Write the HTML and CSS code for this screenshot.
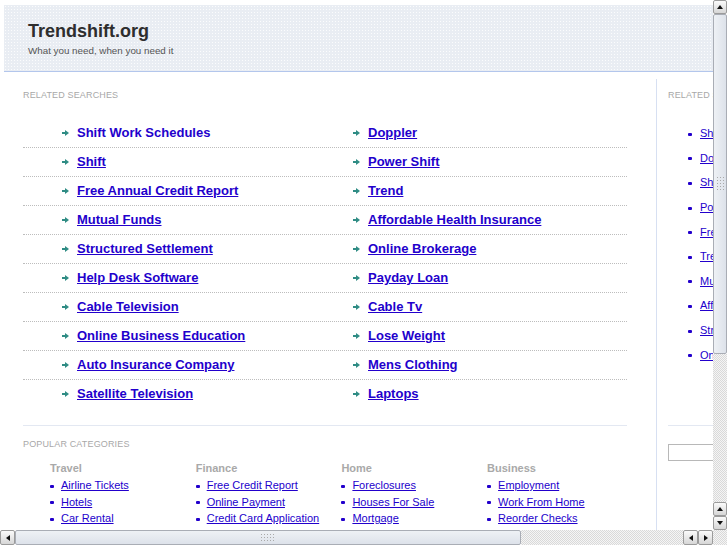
FILE: index.html
```html
<!DOCTYPE html>
<html>
<head>
<meta charset="utf-8">
<link rel="stylesheet" href="styles.css">
</head>
<body>
<div class="window">
  <div class="viewport">
    <div class="page">
      <div class="header">
        <div class="title">Trendshift.org</div>
        <div class="tagline">What you need, when you need it</div>
      </div>
      <div class="content">
        <div class="main">
          <div class="sec-title">RELATED SEARCHES</div>
          <div class="rows">
            <div class="row"><div class="cell c1"><span class="arr"></span><a class="big hover">Shift Work Schedules</a></div><div class="cell"><span class="arr"></span><a class="big">Doppler</a></div></div>
            <div class="row"><div class="cell c1"><span class="arr"></span><a class="big">Shift</a></div><div class="cell"><span class="arr"></span><a class="big">Power Shift</a></div></div>
            <div class="row"><div class="cell c1"><span class="arr"></span><a class="big">Free Annual Credit Report</a></div><div class="cell"><span class="arr"></span><a class="big">Trend</a></div></div>
            <div class="row"><div class="cell c1"><span class="arr"></span><a class="big">Mutual Funds</a></div><div class="cell"><span class="arr"></span><a class="big">Affordable Health Insurance</a></div></div>
            <div class="row"><div class="cell c1"><span class="arr"></span><a class="big">Structured Settlement</a></div><div class="cell"><span class="arr"></span><a class="big">Online Brokerage</a></div></div>
            <div class="row"><div class="cell c1"><span class="arr"></span><a class="big">Help Desk Software</a></div><div class="cell"><span class="arr"></span><a class="big">Payday Loan</a></div></div>
            <div class="row"><div class="cell c1"><span class="arr"></span><a class="big">Cable Television</a></div><div class="cell"><span class="arr"></span><a class="big">Cable Tv</a></div></div>
            <div class="row"><div class="cell c1"><span class="arr"></span><a class="big">Online Business Education</a></div><div class="cell"><span class="arr"></span><a class="big">Lose Weight</a></div></div>
            <div class="row"><div class="cell c1"><span class="arr"></span><a class="big">Auto Insurance Company</a></div><div class="cell"><span class="arr"></span><a class="big">Mens Clothing</a></div></div>
            <div class="row last"><div class="cell c1"><span class="arr"></span><a class="big">Satellite Television</a></div><div class="cell"><span class="arr"></span><a class="big">Laptops</a></div></div>
          </div>
          <div class="sep"></div>
          <div class="sec-title pop">POPULAR CATEGORIES</div>
          <div class="cats">
            <div class="cat">
              <div class="cat-head">Travel</div>
              <ul class="cat-list"><li><a>Airline Tickets</a></li><li><a>Hotels</a></li><li><a>Car Rental</a></li></ul>
            </div>
            <div class="cat">
              <div class="cat-head">Finance</div>
              <ul class="cat-list"><li><a>Free Credit Report</a></li><li><a>Online Payment</a></li><li><a>Credit Card Application</a></li></ul>
            </div>
            <div class="cat">
              <div class="cat-head">Home</div>
              <ul class="cat-list"><li><a>Foreclosures</a></li><li><a>Houses For Sale</a></li><li><a>Mortgage</a></li></ul>
            </div>
            <div class="cat">
              <div class="cat-head">Business</div>
              <ul class="cat-list"><li><a>Employment</a></li><li><a>Work From Home</a></li><li><a>Reorder Checks</a></li></ul>
            </div>
          </div>
        </div>
        <div class="side">
          <div class="sec-title">RELATED SEARCHES</div>
          <ul class="side-list">
            <li><a>Shift Work Schedules</a></li>
            <li><a>Doppler</a></li>
            <li><a>Shift</a></li>
            <li><a>Power Shift</a></li>
            <li><a>Free Annual Credit Report</a></li>
            <li><a>Trend</a></li>
            <li><a>Mutual Funds</a></li>
            <li><a>Affordable Health Insurance</a></li>
            <li><a>Structured Settlement</a></li>
            <li><a>Online Brokerage</a></li>
          </ul>
          <div class="side-sep"></div>
          <input class="search" type="text">
        </div>
      </div>
    </div>
  </div>
  <div class="vscroll">
    <div class="btn up"></div>
    <div class="thumb vthumb"><span class="grip vgrip"></span></div>
    <div class="track"></div>
    <div class="btn up"></div>
    <div class="btn down"></div>
  </div>
  <div class="hscroll">
    <div class="btn left"></div>
    <div class="thumb hthumb"><span class="grip hgrip"></span></div>
    <div class="track"></div>
    <div class="btn left"></div>
    <div class="btn right"></div>
  </div>
  <div class="corner"></div>
</div>
</body>
</html>
```
FILE: styles.css
```css
html, body {
  margin: 0;
  padding: 0;
  background: #fff;
}
body {
  font-family: "Liberation Sans", Arial, sans-serif;
}
.window {
  width: 727px;
  height: 545px;
  display: grid;
  grid-template-columns: 713px 14px;
  grid-template-rows: 530px 15px;
  overflow: hidden;
}
.viewport {
  overflow: hidden;
  background: #fff;
}
.page {
  width: 960px;
  padding: 5px 0 0 4px;
}
.header {
  height: 67px;
  border-bottom: 1px solid #b3c6ec;
  background-color: #e9edf3;
  background-image: radial-gradient(circle, #fbfcfd 0.6px, transparent 0.9px);
  background-size: 3px 3px;
  padding-left: 24px;
  box-sizing: border-box;
  padding-top: 15px;
}
.title {
  font-size: 18px;
  font-weight: bold;
  color: #2e2e2e;
  line-height: 22px;
}
.tagline {
  font-size: 9.8px;
  color: #555;
  line-height: 12px;
  margin-top: 3px;
}
.content {
  display: flex;
  margin-top: 7px;
}
.main {
  width: 604px;
  padding: 0 29px 0 19px;
  border-right: 1px solid #d7e0f2;
  height: 460px;
}
.sec-title {
  font-size: 9px;
  line-height: 11px;
  color: #a8a8a8;
  letter-spacing: 0.15px;
  padding-top: 11px;
}
.rows {
  margin-top: 18px;
}
.row {
  display: grid;
  grid-template-columns: 330px 1fr;
  height: 28px;
  border-bottom: 1px dotted #bdbdbd;
  align-items: center;
}
.row.last {
  border-bottom: none;
}
.cell {
  display: flex;
  align-items: center;
}
.cell.c1 {
  padding-left: 39px;
}
.arr {
  width: 7px;
  height: 6px;
  margin-right: 8px;
  background:
    linear-gradient(#2f8c84, #2f8c84) 0 2px / 4px 2px no-repeat;
  position: relative;
}
.arr::after {
  content: "";
  position: absolute;
  left: 3px;
  top: 0;
  border-left: 4px solid #2f8c84;
  border-top: 3px solid transparent;
  border-bottom: 3px solid transparent;
}
a {
  color: #2200cc;
  text-decoration: underline;
}
.big {
  font-size: 13px;
  font-weight: bold;
  line-height: 16px;
}
.big.hover {
  text-decoration: none;
}
.sep {
  margin-top: 17px;
  border-top: 1px solid #e3e8f2;
}
.sec-title.pop {
  padding-top: 13px;
}
.cats {
  display: grid;
  grid-template-columns: repeat(4, 145.7px);
  padding-left: 27px;
  margin-top: 11px;
}
.cat-head {
  font-size: 11px;
  font-weight: bold;
  color: #a9a9a9;
  line-height: 14px;
}
.cat-list {
  list-style: none;
  margin: 2px 0 0 0;
  padding: 0;
}
.cat-list li {
  font-size: 11px;
  line-height: 16.5px;
  display: flex;
  align-items: center;
}
.cat-list li::before,
.side-list li::before {
  content: "";
  width: 4px;
  height: 3px;
  border-radius: 1px;
  background: #2200cc;
  margin-right: 7px;
  margin-top: 2px;
}
.side {
  padding-left: 11px;
  width: 280px;
}
.side-list {
  list-style: none;
  margin: 20px 0 0 0;
  padding: 0 0 0 20px;
}
.side-list li {
  font-size: 11px;
  height: 24.6px;
  display: flex;
  align-items: center;
}
.side-list li::before {
  margin-right: 8px;
}
.side-sep {
  margin-top: 58px;
  border-top: 1px solid #e3e8f2;
}
.search {
  display: block;
  margin: 18px 0 0 0;
  width: 120px;
  height: 17px;
  box-sizing: border-box;
  border: 1px solid #b8b8b8;
  padding: 0;
}

/* scrollbars */
.vscroll {
  display: flex;
  flex-direction: column;
}
.hscroll {
  display: flex;
  flex-direction: row;
}
.track, .corner {
  flex: 1;
  background: repeating-conic-gradient(#d9d9d9 0 25%, #f5f5f5 0 50%) 0 0 / 2px 2px;
}
.btn {
  box-sizing: border-box;
  width: 14px;
  height: 15px;
  border: 1px solid #9b9b9b;
  border-radius: 2px;
  background: linear-gradient(#fbfbfb, #d6d6d6);
  position: relative;
  flex: none;
}
.vscroll .btn {
  height: 14px;
}
.hscroll .btn {
  width: 15px;
}
.btn::after {
  content: "";
  position: absolute;
  left: 50%;
  top: 50%;
  transform: translate(-50%, -50%);
}
.btn.up::after {
  border-bottom: 4px solid #111;
  border-left: 3.5px solid transparent;
  border-right: 3.5px solid transparent;
}
.btn.down::after {
  border-top: 4px solid #111;
  border-left: 3.5px solid transparent;
  border-right: 3.5px solid transparent;
}
.btn.left::after {
  border-right: 4px solid #111;
  border-top: 3.5px solid transparent;
  border-bottom: 3.5px solid transparent;
}
.btn.right::after {
  border-left: 4px solid #111;
  border-top: 3.5px solid transparent;
  border-bottom: 3.5px solid transparent;
}
.thumb {
  box-sizing: border-box;
  border: 1px solid #a9adb5;
  border-radius: 2px;
  background: #e6eaf0;
  display: flex;
  align-items: center;
  justify-content: center;
  flex: none;
}
.vthumb {
  height: 340px;
  background: linear-gradient(90deg, #eef1f5, #dde2ea);
}
.hthumb {
  width: 506px;
  background: linear-gradient(#eef1f5, #dde2ea);
}
.grip {
  background: radial-gradient(circle, #a9a9a9 0.7px, transparent 1px) 0 0 / 3px 3px;
}
.vgrip {
  width: 9px;
  height: 16px;
}
.hgrip {
  width: 16px;
  height: 9px;
}
```
